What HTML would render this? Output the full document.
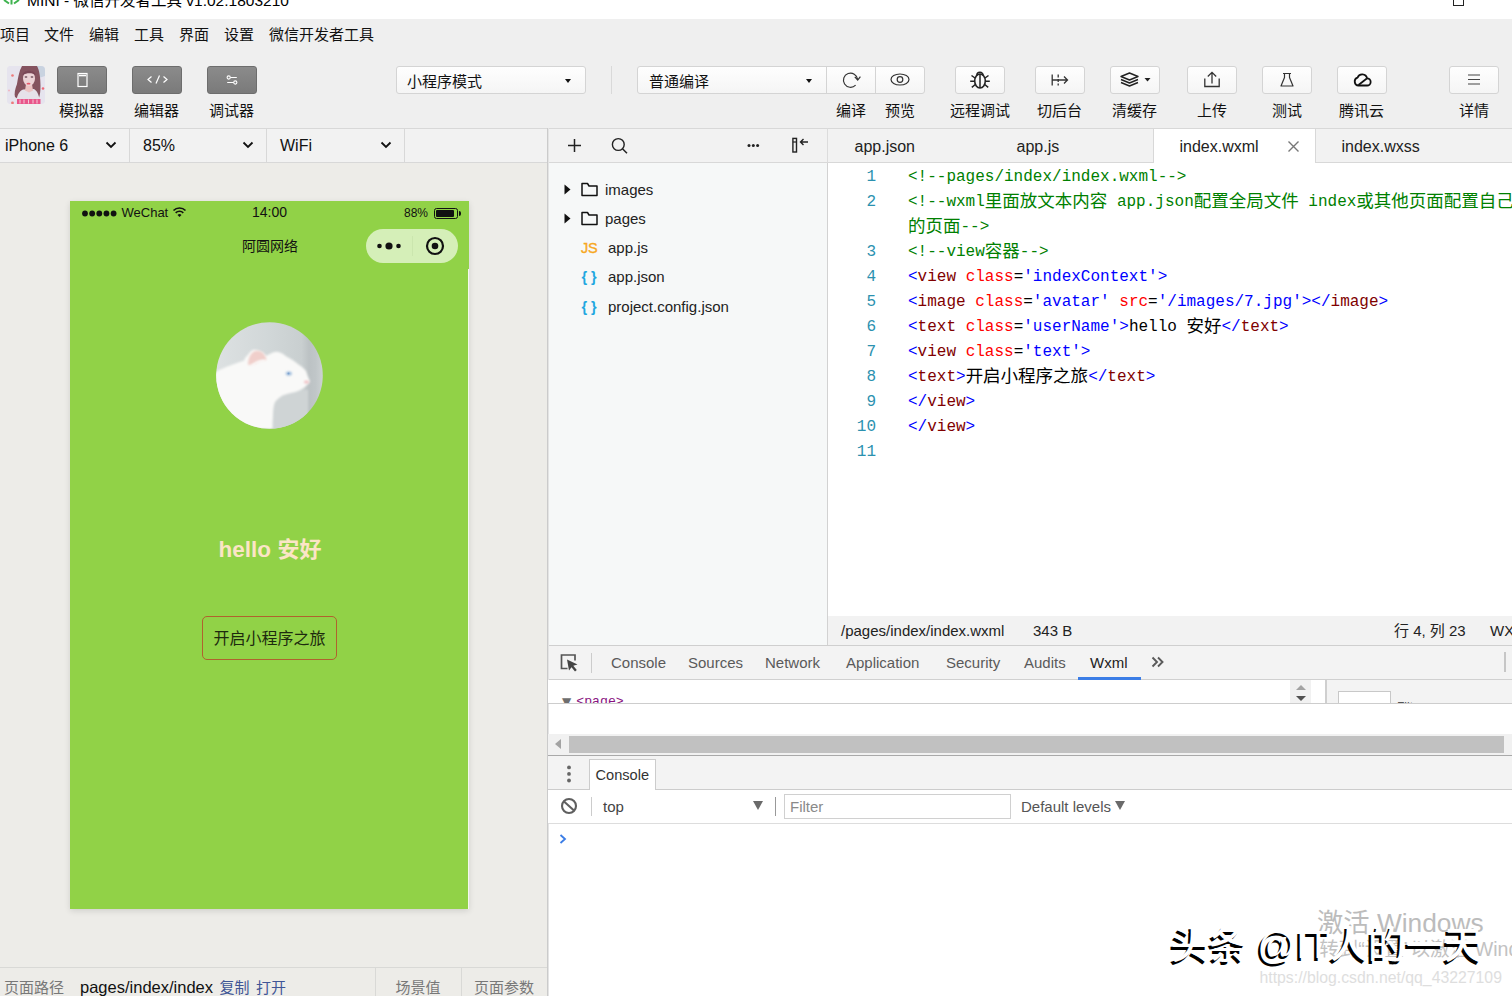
<!DOCTYPE html>
<html lang="zh-CN">
<head>
<meta charset="utf-8">
<title>MINI - 微信开发者工具 v1.02.1803210</title>
<style>
*{box-sizing:border-box;margin:0;padding:0}
html,body{width:1512px;height:996px;overflow:hidden;background:#fff}
body{font-family:"Liberation Sans","Noto Sans CJK SC",sans-serif;color:#222;position:relative;font-size:15px}
.abs{position:absolute}
.t{position:absolute;white-space:nowrap;line-height:1}
/* title bar */
#titlebar{left:0;top:0;width:1512px;height:19px;background:#fff}
/* menu+toolbar */
#topbg{left:0;top:19px;width:1512px;height:110px;background:#efefef}
.menu{top:27px;font-size:15px;color:#111}
.tbtn{position:absolute;top:66px;width:50px;height:28px;background:linear-gradient(#8b8b8b,#7a7a7a);border-radius:3px;border:1px solid #6d6d6d}
.tlabel{top:103px;font-size:15px;color:#111}
.wbtn{position:absolute;top:66px;height:28px;background:linear-gradient(#fefefe,#f5f5f5);border:1px solid #d4d4d4;border-radius:3px}
.sel{position:absolute;top:66px;height:28px;background:linear-gradient(#fefefe,#f5f5f5);border:1px solid #d4d4d4;border-radius:3px;font-size:14px;color:#111}
/* device bar */
#devbar{left:0;top:128px;width:548px;height:35px;background:#f2f2f2;border-top:1px solid #d8d8d8;border-bottom:1px solid #d8d8d8}
.dsel{top:138px;font-size:16px;color:#111}
.vsep{position:absolute;top:129px;width:1px;height:33px;background:#d8d8d8}
/* simulator */
#sim{left:0;top:163px;width:547px;height:805px;background:#edece8}
#phone{left:70px;top:201px;width:399px;height:708px;background:#91d247;box-shadow:0 2px 6px rgba(0,0,0,.12)}
/* bottom path bar */
#pathbar{left:0;top:967px;width:547px;height:29px;background:#edece8;border-top:1px solid #d9d9d6}
/* file tree */
#tree{left:548px;top:163px;width:280px;height:482px;background:#f6f8f8;border-right:1px solid #d2d2d2}
#treebar{left:548px;top:128px;width:280px;height:35px;background:#f2f2f2;border-top:1px solid #d8d8d8;border-bottom:1px solid #d8d8d8;border-right:1px solid #dcdcdc}
.fname{font-size:15px;color:#222}
/* editor */
#tabs{left:828px;top:128px;width:684px;height:35px;background:#f2f2f2;border-top:1px solid #d8d8d8;border-bottom:1px solid #d8d8d8}
.tab{font-size:16px;color:#222;top:139px}
#activetab{left:1153px;top:129px;width:163px;height:34px;background:#fff;border-left:1px solid #d8d8d8;border-right:1px solid #d8d8d8}
#editor{left:828px;top:163px;width:684px;height:453px;background:#fff}
.ln{position:absolute;left:828px;width:48px;text-align:right;font-family:"Liberation Mono","Noto Sans CJK SC",monospace;font-size:16px;color:#2b91af;line-height:25px;height:25px}
.cl{position:absolute;left:908px;white-space:nowrap;font-family:"Liberation Mono","Noto Sans CJK SC",monospace;font-size:16px;line-height:25px;height:25px;color:#000}
.k{font-size:17.500px;line-height:1;position:relative;top:1px}.c{color:#008000}.b{color:#0000ff}.m{color:#800000}.r{color:#ff0000}
#status{left:828px;top:616px;width:684px;height:29px;background:#f2f2f2}
.st{font-size:15px;color:#222;top:623px}
/* devtools */
#dtabs{left:548px;top:645px;width:964px;height:35px;background:#f3f3f3;border-top:1px solid #cfcfcf;border-bottom:1px solid #d0d0d0}
.dt{font-size:15px;color:#5a5a5a;top:655px}
</style>
</head>
<body>
<div id="titlebar" class="abs"></div>
<div id="topbg" class="abs"></div>
<div id="devbar" class="abs"></div>
<div id="sim" class="abs"></div>
<div id="phone" class="abs"></div>
<div id="pathbar" class="abs"></div>
<div id="treebar" class="abs"></div>
<div id="tree" class="abs"></div>
<div id="tabs" class="abs"></div>
<div id="activetab" class="abs"></div>
<div id="editor" class="abs"></div>
<div id="status" class="abs"></div>
<div id="dtabs" class="abs"></div>

<!-- TITLE -->
<div class="t" style="left:27px;top:-7px;font-size:15.500px;color:#000">MINI - 微信开发者工具 v1.02.1803210</div>
<svg class="abs" style="left:0;top:0" width="24" height="10" viewBox="0 0 24 10"><path d="M4 0l5 3.500M19 0l-5 3.500M11.500 0v4.500" stroke="#3fb34f" stroke-width="2" fill="none"/></svg>
<div class="abs" style="left:1453px;top:-6px;width:11px;height:12px;border:1px solid #222"></div>
<!-- MENU -->
<div class="t menu" style="left:0px">项目</div>
<div class="t menu" style="left:44px">文件</div>
<div class="t menu" style="left:89px">编辑</div>
<div class="t menu" style="left:134px">工具</div>
<div class="t menu" style="left:179px">界面</div>
<div class="t menu" style="left:224px">设置</div>
<div class="t menu" style="left:269px">微信开发者工具</div>
<!-- TOOLBAR LEFT -->
<div class="abs" id="avatar" style="left:7px;top:66px;width:38px;height:38px;border-radius:4px;overflow:hidden;background:#e6e3ee">
<svg width="38" height="38" viewBox="0 0 38 38"><defs><filter id="ab" x="-20%" y="-20%" width="140%" height="140%"><feGaussianBlur stdDeviation=".7"/></filter></defs>
<rect width="38" height="38" fill="#e6e4ee"/>
<g filter="url(#ab)">
<path d="M30 0h8v10l-6 2z" fill="#c9d3e0"/>
<path d="M15 0h15c2.500 4 3.500 12 3.500 20 0 5-.5 9-1.500 12l-4 1-8-6-9 6-3-2c-1-3 0-8 2-13C11 12 12 5 15 0z" fill="#85525f"/>
<path d="M9 38c.5-8 3-13 7-14.500l11-.5c3.500 2 5.500 7 6 15z" fill="#e6e1e9"/>
<path d="M19 18h6l1 6.500-4 2-4-2z" fill="#ecc3c3"/>
<ellipse cx="22" cy="12.500" rx="6" ry="7.500" fill="#ecd2d6"/>
<path d="M15.500 9c1-5 11-6 13.500 0-4-2.500-9-2.500-13.500 0z" fill="#7a4656"/>
<ellipse cx="19" cy="11" rx="1.400" ry=".9" fill="#8a6a74"/><ellipse cx="25" cy="11" rx="1.400" ry=".9" fill="#8a6a74"/>
<ellipse cx="21.500" cy="17.700" rx="2" ry=".9" fill="#e8566a"/>
<path d="M10 33h23.500v5H10z" fill="#e9568a"/>
<path d="M13 33.500v4M17 33.500v4M21.500 33.500v4M26 33.500v4M30 33.500v4" stroke="#f4c9d8" stroke-width="1"/>
<circle cx="5.500" cy="9.500" r="1.300" fill="#ee7a7a"/><circle cx="36" cy="22.500" r="1.300" fill="#ee6a76"/><circle cx="5.500" cy="37" r="1.400" fill="#ee7a7a"/><circle cx="2" cy="24.500" r="1" fill="#f0b5c0"/>
</g></svg></div>
<div class="tbtn" style="left:57px"><svg width="48" height="26" viewBox="0 0 48 26"><rect x="20" y="6.5" width="9" height="13" fill="none" stroke="#fff" stroke-width="1.2"/><path d="M21 8.5h7" stroke="#fff" stroke-width="1.6"/></svg></div>
<div class="tbtn" style="left:132px"><svg width="48" height="26" viewBox="0 0 48 26"><path d="M18.5 9.5l-3.5 3 3.500 3M30.500 9.500l3.500 3-3.500 3M26.500 8.500l-3.500 8" fill="none" stroke="#fff" stroke-width="1.200"/></svg></div>
<div class="tbtn" style="left:207px"><svg width="48" height="26" viewBox="0 0 48 26"><path d="M22.400 10.500h6.400M19.200 15.500h6.400" stroke="#fff" stroke-width="1.200" fill="none"/><circle cx="20.700" cy="10.500" r="1.600" fill="none" stroke="#fff" stroke-width="1.100"/><circle cx="27.300" cy="15.500" r="1.600" fill="none" stroke="#fff" stroke-width="1.100"/></svg></div>
<div class="t tlabel" style="left:59px">模拟器</div>
<div class="t tlabel" style="left:134px">编辑器</div>
<div class="t tlabel" style="left:209px">调试器</div>
<!-- SELECTS -->
<div class="sel" style="left:396px;width:190px"><span class="t" style="left:10px;top:7px;font-size:15px">小程序模式</span><span class="abs" style="left:168px;top:12px;border:3.500px solid transparent;border-top:4px solid #111"></span></div>
<div class="abs" style="left:611px;top:66px;width:1px;height:28px;background:#d9d9d9"></div>
<div class="sel" style="left:637px;width:190px;border-radius:3px 0 0 3px"><span class="t" style="left:11px;top:7px;font-size:15px">普通编译</span><span class="abs" style="left:168px;top:12px;border:3.500px solid transparent;border-top:4px solid #111"></span></div>
<div class="wbtn" style="left:826px;width:50px;border-radius:0"><svg width="48" height="26" viewBox="0 0 48 26"><path d="M28.600 18.200A7.100 7.100 0 1 1 30.600 12.300" fill="none" stroke="#333" stroke-width="1.200"/><path d="M27.800 9.800l2.900 3.200 2.700-3.400" fill="none" stroke="#333" stroke-width="1.200"/></svg></div>
<div class="wbtn" style="left:875px;width:50px;border-radius:0 3px 3px 0"><svg width="48" height="26" viewBox="0 0 48 26"><ellipse cx="24" cy="12.500" rx="9" ry="5.500" fill="none" stroke="#333" stroke-width="1.200"/><circle cx="24" cy="12.500" r="2.800" fill="none" stroke="#333" stroke-width="1.200"/></svg></div>
<div class="wbtn" style="left:955px;width:50px"><svg width="48" height="26" viewBox="0 0 48 26"><ellipse cx="24" cy="14" rx="5.300" ry="7" fill="none" stroke="#222" stroke-width="1.600"/><path d="M24 7v14M20.800 8.500a3.200 3.200 0 0 1 6.400 0M19 11l-3.500-2.500M29 11l3.500-2.500M18.700 14.200h-4.500M29.300 14.200h4.500M19.300 17.500l-3.500 2.800M28.700 17.500l3.500 2.800" fill="none" stroke="#222" stroke-width="1.500"/></svg></div>
<div class="wbtn" style="left:1035px;width:50px"><svg width="48" height="26" viewBox="0 0 48 26"><path d="M16.200 7.500v11M16.200 13h15M28 9.500l3.500 3.500-3.500 3.500" fill="none" stroke="#333" stroke-width="1.300"/><path d="M22.200 7.500v11" fill="none" stroke="#333" stroke-width="1.300" stroke-dasharray="3 1.500"/></svg></div>
<div class="wbtn" style="left:1110px;width:50px"><svg width="48" height="26" viewBox="0 0 48 26"><path d="M10 9.500l8.500-3.500 8.500 3.500-8.500 3.500zM10 12.500l8.500 3.500 8.500-3.500M10 15.500l8.500 3.500 8.500-3.500" fill="none" stroke="#222" stroke-width="1.400" stroke-linejoin="round"/><path d="M33.500 11h6l-3 3.500z" fill="#222"/></svg></div>
<div class="wbtn" style="left:1187px;width:50px"><svg width="48" height="26" viewBox="0 0 48 26"><path d="M24 5.500v11M19.800 9.500l4.200-4.200 4.200 4.200M16.800 11.500v8h14.400v-8" fill="none" stroke="#333" stroke-width="1.300"/></svg></div>
<div class="wbtn" style="left:1262px;width:50px"><svg width="48" height="26" viewBox="0 0 48 26"><path d="M20 6.500h8M21.500 6.500v4l-3.500 8.500h12l-3.500-8.500v-4" fill="none" stroke="#333" stroke-width="1.200" stroke-linejoin="round"/></svg></div>
<div class="wbtn" style="left:1337px;width:50px"><svg width="48" height="26" viewBox="0 0 48 26"><path d="M20.500 18.500a4 4 0 0 1-1-7.800 5 5 0 0 1 9.600 .6 3.600 3.600 0 0 1-.1 7.200z" fill="none" stroke="#111" stroke-width="1.800" stroke-linejoin="round"/><path d="M20.500 18l8.300-6.500" stroke="#111" stroke-width="1.700"/></svg></div>
<div class="wbtn" style="left:1449px;width:50px"><svg width="48" height="26" viewBox="0 0 48 26"><path d="M18 8h12M18 12.500h12M18 17h12" stroke="#444" stroke-width="1.100"/></svg></div>
<div class="t tlabel" style="left:836px">编译</div>
<div class="t tlabel" style="left:885px">预览</div>
<div class="t tlabel" style="left:950px">远程调试</div>
<div class="t tlabel" style="left:1037px">切后台</div>
<div class="t tlabel" style="left:1112px">清缓存</div>
<div class="t tlabel" style="left:1197px">上传</div>
<div class="t tlabel" style="left:1272px">测试</div>
<div class="t tlabel" style="left:1339px">腾讯云</div>
<div class="t tlabel" style="left:1459px">详情</div>

<!-- DEVICE BAR -->
<div class="t dsel" style="left:5px">iPhone 6</div>
<svg class="abs" style="left:105px;top:141px" width="12" height="8" viewBox="0 0 12 8"><path d="M1.500 1.500l4.500 4.500 4.500-4.500" fill="none" stroke="#111" stroke-width="1.800"/></svg>
<div class="vsep" style="left:129px"></div>
<div class="t dsel" style="left:143px">85%</div>
<svg class="abs" style="left:242px;top:141px" width="12" height="8" viewBox="0 0 12 8"><path d="M1.500 1.500l4.500 4.500 4.500-4.500" fill="none" stroke="#111" stroke-width="1.800"/></svg>
<div class="vsep" style="left:266px"></div>
<div class="t dsel" style="left:280px">WiFi</div>
<svg class="abs" style="left:380px;top:141px" width="12" height="8" viewBox="0 0 12 8"><path d="M1.500 1.500l4.500 4.500 4.500-4.500" fill="none" stroke="#111" stroke-width="1.800"/></svg>
<div class="vsep" style="left:404px"></div>
<div class="abs" style="left:547px;top:128px;width:1px;height:868px;background:#cbcbcb;box-shadow:1px 0 0 #e4e4e4"></div>
<!-- PHONE -->
<svg class="abs" style="left:81.500px;top:210px" width="36" height="7" viewBox="0 0 36 7"><circle cx="3.00" cy="3.500" r="2.900" fill="#111"/><circle cx="10.15" cy="3.500" r="2.900" fill="#111"/><circle cx="17.30" cy="3.500" r="2.900" fill="#111"/><circle cx="24.45" cy="3.500" r="2.900" fill="#111"/><circle cx="31.60" cy="3.500" r="2.900" fill="#111"/></svg><div class="t" style="left:121.500px;top:206px;font-size:13px;color:#111">WeChat</div>
<svg class="abs" style="left:172px;top:206px" width="15" height="12" viewBox="0 0 15 12"><path d="M1.500 4.500a8.500 8.500 0 0 1 12 0M3.700 6.800a5.400 5.400 0 0 1 7.600 0" fill="none" stroke="#111" stroke-width="1.700"/><path d="M5.500 9a2.800 2.800 0 0 1 4 0L7.500 11z" fill="#111"/></svg>
<div class="t" style="left:252px;top:205px;font-size:14px;color:#111">14:00</div>
<div class="t" style="left:404px;top:207px;font-size:12px;color:#111">88%</div>
<div class="abs" style="left:434px;top:208px;width:24px;height:11px;border:1px solid #111;border-radius:2.500px"></div>
<div class="abs" style="left:436px;top:210px;width:18px;height:7px;background:#111;border-radius:1px"></div>
<div class="abs" style="left:459px;top:211px;width:2px;height:5px;background:#111;border-radius:0 2px 2px 0"></div>
<div class="t" style="left:242px;top:239px;font-size:14px;color:#111">阿圆网络</div>
<div class="abs" style="left:366px;top:229px;width:92px;height:34px;border-radius:17px;background:#d5efb8"></div>
<div class="abs" style="left:412px;top:236px;width:1px;height:20px;background:#cbe6ae"></div>
<svg class="abs" style="left:376px;top:240px" width="26" height="12" viewBox="0 0 26 12"><circle cx="3.500" cy="6" r="2.300" fill="#111"/><circle cx="13" cy="6" r="3.600" fill="#111"/><circle cx="22.500" cy="6" r="2.300" fill="#111"/></svg>
<svg class="abs" style="left:424px;top:235px" width="22" height="22" viewBox="0 0 22 22"><circle cx="11" cy="11" r="8" fill="none" stroke="#111" stroke-width="2.200"/><circle cx="11" cy="11" r="3.300" fill="#111"/></svg>
<div class="abs" style="left:468px;top:269px;width:1px;height:640px;background:#f4f8ee"></div>
<!-- cat avatar -->
<svg class="abs" style="left:216px;top:322px" width="107" height="107" viewBox="0 0 107 107">
<defs><clipPath id="cc"><circle cx="53.500" cy="53.500" r="53.300"/></clipPath>
<linearGradient id="cg" x1="0" y1="0" x2="1" y2="0"><stop offset="0" stop-color="#dde1e2"/><stop offset=".5" stop-color="#d1d7d8"/><stop offset=".8" stop-color="#c9cfd0"/><stop offset=".87" stop-color="#bcc2c4"/><stop offset=".93" stop-color="#c0c6c8"/><stop offset="1" stop-color="#cdd2d3"/></linearGradient>
<filter id="bl" x="-20%" y="-20%" width="140%" height="140%"><feGaussianBlur stdDeviation="1.300"/></filter>
<filter id="bl2" x="-50%" y="-50%" width="200%" height="200%"><feGaussianBlur stdDeviation="1"/></filter></defs>
<g clip-path="url(#cc)"><rect width="107" height="107" fill="url(#cg)"/>
<path d="M58 76c10-6 22-9 34-8v45H56z" fill="#cfd4d5" filter="url(#bl)"/>
<path d="M-4 52C6 46 18 42 28 38.500c1-3 2.500-4.500 4-5.500 2-4 5-6 8-5 4 .5 8 3 10 6 1.500-1 3-1.800 4-2 3-2 6-2.500 8-2 3 .5 5.500 2 7.500 4 5 2.500 9.500 5.500 13 8.500 3 2 5.500 4 7.500 6.500 1 3.500 2.500 7 4 10.500-1.500 2-3.500 4-5.500 6-3 2-6 3.500-9 4.500-4.500 1-9 2-13 3.500-3 1.800-5.500 4-7.500 6.500-1.500 4-2 8.500-2 13-.3 4.500-.5 9-.5 14H-4z" fill="#f9f9f8" filter="url(#bl)"/>
<path d="M32 43c0-6 2-11 6-13.500 3.500-1.500 7-.5 9.500 2 1.500 1.800 2.500 4 3 6.500-4 0-8 1.500-11 4-2.500 .3-5 .5-7.500 1z" fill="#f0cfcb" filter="url(#bl2)"/><path d="M36 44c3-3 8-5 13-5" stroke="#faf8f7" stroke-width="2.500" fill="none" filter="url(#bl2)"/>
<ellipse cx="72.800" cy="51.500" rx="3" ry="2" fill="#9dbbdc" filter="url(#bl2)"/>
<ellipse cx="72.500" cy="51.500" rx="1" ry=".9" fill="#7fa3cf"/>
<ellipse cx="90.500" cy="60" rx="2.600" ry="1.500" fill="#f0bfc3" filter="url(#bl2)"/>
</g></svg>
<div class="t" style="left:218.500px;top:539px;font-size:22px;font-weight:bold;color:#fbe5c6"><span style="font-size:22.500px">hello</span><span style="display:inline-block;width:6.400px"></span>安好</div>
<div class="abs" style="left:202px;top:616px;width:135px;height:44px;border:1px solid #b0622e;border-radius:5px"></div>
<div class="t" style="left:213.500px;top:631px;font-size:16px;color:#1d2a0e">开启小程序之旅</div>
<!-- PATH BAR -->
<div class="t" style="left:4px;top:980px;font-size:15px;color:#787878">页面路径</div>
<div class="t" style="left:80px;top:979px;font-size:16.500px;color:#111">pages/index/index</div>
<div class="t" style="left:219.500px;top:980px;font-size:15px;color:#3f5596">复制</div>
<div class="t" style="left:256px;top:980px;font-size:15px;color:#3f5596">打开</div>
<div class="abs" style="left:375px;top:968px;width:1px;height:28px;background:#d9d9d6"></div>
<div class="abs" style="left:461px;top:968px;width:1px;height:28px;background:#d9d9d6"></div>
<div class="t" style="left:395.500px;top:980px;font-size:15px;color:#787878">场景值</div>
<div class="t" style="left:474px;top:980px;font-size:15px;color:#787878">页面参数</div>

<!-- TREE BAR -->
<svg class="abs" style="left:566.500px;top:138px" width="15" height="15" viewBox="0 0 15 15"><path d="M7.500 1v13M1 7.500h13" stroke="#222" stroke-width="1.500"/></svg>
<svg class="abs" style="left:610px;top:136px" width="19" height="19" viewBox="0 0 19 19"><circle cx="8.300" cy="8.500" r="5.900" fill="none" stroke="#222" stroke-width="1.400"/><path d="M12.500 12.800l4.500 4.500" stroke="#222" stroke-width="1.500"/></svg>
<svg class="abs" style="left:747px;top:143px" width="13" height="5" viewBox="0 0 13 5"><circle cx="2" cy="2.500" r="1.500" fill="#222"/><circle cx="6.300" cy="2.500" r="1.500" fill="#222"/><circle cx="10.600" cy="2.500" r="1.500" fill="#222"/></svg>
<svg class="abs" style="left:790px;top:136px" width="20" height="18" viewBox="0 0 20 18"><rect x="2.900" y="2.400" width="3.600" height="13.600" fill="none" stroke="#222" stroke-width="1.400"/><path d="M2.900 6h3.600" stroke="#222" stroke-width="1.200"/><path d="M10.500 6h7.500M13.500 3l-3 3 3 3" fill="none" stroke="#222" stroke-width="1.400"/></svg>
<!-- TREE -->
<svg class="abs" style="left:564px;top:184px" width="7" height="11" viewBox="0 0 7 11"><path d="M0.500 0.500l6 5-6 5z" fill="#111"/></svg><svg class="abs" style="left:581px;top:182px" width="18" height="15" viewBox="0 0 18 15"><path d="M1 13.500V1.500h5.500l1.500 2.500h8v9.500z" fill="none" stroke="#111" stroke-width="1.500" stroke-linejoin="round"/></svg>
<div class="t fname" style="left:605px;top:182px">images</div>
<svg class="abs" style="left:564px;top:213px" width="7" height="11" viewBox="0 0 7 11"><path d="M0.500 0.500l6 5-6 5z" fill="#111"/></svg><svg class="abs" style="left:581px;top:211px" width="18" height="15" viewBox="0 0 18 15"><path d="M1 13.500V1.500h5.500l1.500 2.500h8v9.500z" fill="none" stroke="#111" stroke-width="1.500" stroke-linejoin="round"/></svg>
<div class="t fname" style="left:605px;top:211px">pages</div>
<div class="t" style="left:581px;top:241px;font-size:14.500px;color:#f7a81f;-webkit-text-stroke:.35px #f7a81f;letter-spacing:-.2px">JS</div>
<div class="t fname" style="left:608px;top:240px">app.js</div>
<div class="t" style="left:581.500px;top:269.500px;font-size:14.500px;font-weight:bold;color:#22a7e0;letter-spacing:3.800px">{}</div>
<div class="t fname" style="left:608px;top:269px">app.json</div>
<div class="t" style="left:581.500px;top:299.500px;font-size:14.500px;font-weight:bold;color:#22a7e0;letter-spacing:3.800px">{}</div>
<div class="t fname" style="left:608px;top:299px">project.config.json</div>
<!-- TABS -->
<div class="t tab" style="left:854.500px">app.json</div>
<div class="t tab" style="left:1016.500px">app.js</div>
<div class="t tab" style="left:1179.500px">index.wxml</div>
<svg class="abs" style="left:1287px;top:140px" width="13" height="13" viewBox="0 0 13 13"><path d="M1.500 1.500l10 10M11.500 1.500l-10 10" stroke="#777" stroke-width="1.400"/></svg>
<div class="t tab" style="left:1341.500px">index.wxss</div>
<!-- CODE -->
<div class="ln" style="top:165px">1</div><div class="cl" style="top:165px"><span class="c">&lt;!--pages/index/index.wxml--&gt;</span></div>
<div class="ln" style="top:190px">2</div><div class="cl" style="top:190px"><span class="c">&lt;!--wxml<span class="k">里面放文本内容</span> app.json<span class="k">配置全局文件</span> index<span class="k">或其他页面配置自己</span></span></div>
<div class="cl" style="top:215px"><span class="c"><span class="k">的页面</span>--&gt;</span></div>
<div class="ln" style="top:240px">3</div><div class="cl" style="top:240px"><span class="c">&lt;!--view<span class="k">容器</span>--&gt;</span></div>
<div class="ln" style="top:265px">4</div><div class="cl" style="top:265px"><span class="b">&lt;</span><span class="m">view</span> <span class="r">class</span>=<span class="b">'indexContext'</span><span class="b">&gt;</span></div>
<div class="ln" style="top:290px">5</div><div class="cl" style="top:290px"><span class="b">&lt;</span><span class="m">image</span> <span class="r">class</span>=<span class="b">'avatar'</span> <span class="r">src</span>=<span class="b">'/images/7.jpg'</span><span class="b">&gt;&lt;/</span><span class="m">image</span><span class="b">&gt;</span></div>
<div class="ln" style="top:315px">6</div><div class="cl" style="top:315px"><span class="b">&lt;</span><span class="m">text</span> <span class="r">class</span>=<span class="b">'userName'</span><span class="b">&gt;</span>hello <span class="k">安好</span><span class="b">&lt;/</span><span class="m">text</span><span class="b">&gt;</span></div>
<div class="ln" style="top:340px">7</div><div class="cl" style="top:340px"><span class="b">&lt;</span><span class="m">view</span> <span class="r">class</span>=<span class="b">'text'</span><span class="b">&gt;</span></div>
<div class="ln" style="top:365px">8</div><div class="cl" style="top:365px"><span class="b">&lt;</span><span class="m">text</span><span class="b">&gt;</span><span class="k">开启小程序之旅</span><span class="b">&lt;/</span><span class="m">text</span><span class="b">&gt;</span></div>
<div class="ln" style="top:390px">9</div><div class="cl" style="top:390px"><span class="b">&lt;/</span><span class="m">view</span><span class="b">&gt;</span></div>
<div class="ln" style="top:415px">10</div><div class="cl" style="top:415px"><span class="b">&lt;/</span><span class="m">view</span><span class="b">&gt;</span></div>
<div class="ln" style="top:440px">11</div>

<!-- STATUS -->
<div class="t st" style="left:841px">/pages/index/index.wxml</div>
<div class="t st" style="left:1033px">343 B</div>
<div class="t st" style="left:1394px">行 4, 列 23</div>
<div class="t st" style="left:1490px">WXML</div>

<!-- DEVTOOLS TABS -->
<svg class="abs" style="left:559px;top:652px" width="22" height="22" viewBox="0 0 22 22"><path d="M16 8.500V3H2.500v13.500h6" fill="none" stroke="#555" stroke-width="1.700"/><path d="M8 7.500l10.500 5-4.200 1.300 3.500 4.200-1.800 1.500-3.500-4.300-2.500 3.300z" fill="#444"/></svg>
<div class="abs" style="left:591px;top:653px;width:1px;height:20px;background:#ccc"></div>
<div class="t dt" style="left:611px">Console</div>
<div class="t dt" style="left:688px">Sources</div>
<div class="t dt" style="left:765px">Network</div>
<div class="t dt" style="left:846px">Application</div>
<div class="t dt" style="left:946px">Security</div>
<div class="t dt" style="left:1024px">Audits</div>
<div class="t dt" style="left:1090px;color:#222">Wxml</div>
<div class="abs" style="left:1078px;top:677px;width:63px;height:3px;background:#3b7de6"></div>
<svg class="abs" style="left:1151px;top:656px" width="13" height="12" viewBox="0 0 13 12"><path d="M1.500 1.500l4.500 4.500-4.500 4.500M7 1.500l4.500 4.500-4.500 4.500" fill="none" stroke="#5a5a5a" stroke-width="1.900"/></svg>
<div class="abs" style="left:1504px;top:652px;width:2px;height:20px;background:#c6c6c6"></div>
<!-- WXML PANEL sliver -->
<div class="abs" style="left:548px;top:680px;width:964px;height:23px;background:#fff;overflow:hidden">
 <div class="t" style="left:14px;top:15px;font-size:13.200px;font-family:'Liberation Mono',monospace;color:#881280"><span style="color:#6e6e6e;font-size:12px;font-family:'DejaVu Sans',sans-serif;position:relative;top:1px;margin-right:5px">▼</span>&lt;page&gt;</div>
 <div class="abs" style="left:742px;top:0;width:21px;height:23px;background:#f1f1f1"></div>
 <div class="abs" style="left:747.500px;top:5px;border:5px solid transparent;border-top:none;border-bottom:5px solid #a3a3a3"></div>
 <div class="abs" style="left:747.500px;top:16px;border:5px solid transparent;border-bottom:none;border-top:5px solid #505050"></div>
 <div class="abs" style="left:777px;top:0;width:2px;height:23px;background:#cfcfcf"></div>
 <div class="abs" style="left:779px;top:0;width:185px;height:23px;background:#f3f3f3"></div>
 <div class="abs" style="left:790px;top:11px;width:53px;height:20px;background:#fff;border:1px solid #c8c8c8"></div>
 <div class="t" style="left:849px;top:21px;font-size:12px;color:#555">Filter</div>
</div>
<div class="abs" style="left:548px;top:703px;width:964px;height:1px;background:#cdcdcd"></div>
<!-- H SCROLLBAR -->
<div class="abs" style="left:548px;top:734px;width:964px;height:21px;background:#f1f1f1"></div>
<div class="abs" style="left:569px;top:736px;width:935px;height:17px;background:#c1c1c1"></div>
<div class="abs" style="left:555px;top:739px;border:5px solid transparent;border-left:none;border-right:6px solid #a3a3a3"></div>
<!-- DRAWER -->
<div class="abs" style="left:548px;top:755px;width:964px;height:35px;background:#f3f3f3;border-top:1px solid #a9a9a9;border-bottom:1px solid #ccc"></div>
<svg class="abs" style="left:566px;top:764px" width="6" height="20" viewBox="0 0 6 20"><circle cx="3" cy="3.400" r="1.900" fill="#666"/><circle cx="3" cy="9.900" r="1.900" fill="#666"/><circle cx="3" cy="16.500" r="1.900" fill="#666"/></svg>
<div class="abs" style="left:589px;top:759px;width:67px;height:31px;background:#fff;border:1px solid #ccc;border-bottom:none"></div>
<div class="t" style="left:595.500px;top:768px;font-size:14.600px;color:#333">Console</div>
<!-- CONSOLE TOOLBAR -->
<div class="abs" style="left:548px;top:790px;width:964px;height:34px;background:#fff;border-bottom:1px solid #ddd"></div>
<svg class="abs" style="left:560px;top:797px" width="18" height="18" viewBox="0 0 18 18"><circle cx="9" cy="9" r="7" fill="none" stroke="#5f5f5f" stroke-width="2.100"/><path d="M4 4.500l10 9" stroke="#5f5f5f" stroke-width="2.100"/></svg>
<div class="abs" style="left:591px;top:797px;width:1px;height:19px;background:#ccc"></div>
<div class="t" style="left:603px;top:799px;font-size:15px;color:#444">top</div>
<div class="abs" style="left:753px;top:801px;border:5px solid transparent;border-bottom:none;border-top:9px solid #6a6a6a"></div>
<div class="abs" style="left:775px;top:797px;width:1px;height:19px;background:#999"></div>
<div class="abs" style="left:784px;top:794px;width:227px;height:25px;background:#fff;border:1px solid #d0d0d0"></div>
<div class="t" style="left:790px;top:799px;font-size:15px;color:#8a8a8a">Filter</div>
<div class="t" style="left:1021px;top:799px;font-size:15px;color:#555">Default levels</div>
<div class="abs" style="left:1115px;top:801px;border:5px solid transparent;border-bottom:none;border-top:9px solid #6a6a6a"></div>
<svg class="abs" style="left:559px;top:833px" width="8" height="12" viewBox="0 0 8 12"><path d="M1.500 2l4.500 4-4.500 4" fill="none" stroke="#3b7de6" stroke-width="1.800"/></svg>
<!-- WATERMARKS -->
<div class="t" style="left:1317px;top:909.500px;font-size:26.300px;color:#bcbcbc">激活 Windows</div>
<div class="t" style="left:1319px;top:940px;font-size:19.600px;color:#c2c2c2">转到“设置”以激活 Windows。</div>
<div class="t" style="left:1259.500px;top:970px;font-size:15.800px;color:#dedede">https://blog.csdn.net/qq_43227109</div>
<div class="t" style="left:1171px;top:925.500px;font-size:38px;font-weight:500;color:#fff;text-shadow:-2.500px 2.500px 0 #000">头条 @IT人的一天</div>
<!--SECTIONS-->
</body>
</html>
